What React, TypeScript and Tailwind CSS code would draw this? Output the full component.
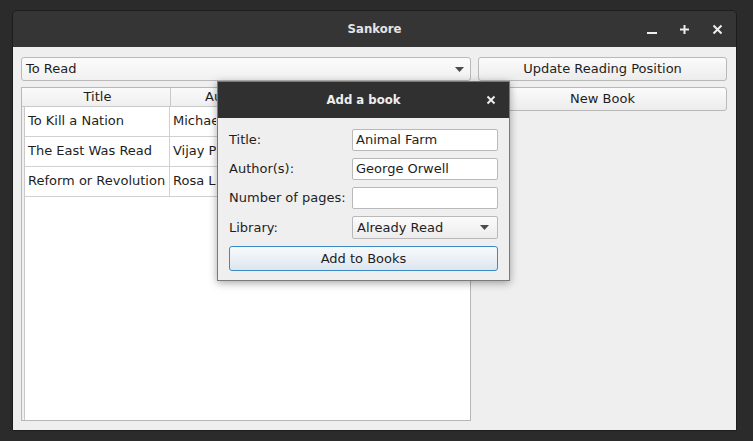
import React from "react";

const font = { fontFamily: '"DejaVu Sans", sans-serif' };
const cond = { fontFamily: '"DejaVu Sans Condensed", "DejaVu Sans", sans-serif' };

function Arrow() {
  return (
    <svg width="9" height="5" viewBox="0 0 9 5" className="shrink-0">
      <path d="M0 0h9L4.5 5z" fill="#4a4a4a" />
    </svg>
  );
}

export default function App() {
  const rows = [
    ["To Kill a Nation", "Michael Parenti"],
    ["The East Was Read", "Vijay Prashad"],
    ["Reform or Revolution", "Rosa Luxemburg"],
  ];
  return (
    <div className="w-[753px] h-[441px] bg-[#2b2b2b] pt-[10px] pl-[12px] text-[13px] text-[#1e1e1e]" style={font}>
      <div className="relative w-[725px] h-[421px] flex flex-col border border-[#1d1d1d] rounded-t-[5px] overflow-hidden">
        <div className="h-[36px] bg-[#353535] flex items-center justify-center relative shrink-0">
          <span className="text-[#e4e4e4] text-[13px] font-bold" style={cond}>Sankore</span>
          <div className="absolute right-[13px] top-0 h-full flex items-center gap-[22px] text-[#eeeeee]">
            <div className="w-[11px] h-[11px] flex items-end justify-center pb-[1px]"><div className="w-[10px] h-[2px] bg-[#eee]" /></div>
            <svg width="11" height="11" viewBox="0 0 11 11"><path d="M5.5 1v9M1 5.5h9" stroke="#eee" strokeWidth="2" /></svg>
            <svg width="11" height="11" viewBox="0 0 11 11"><path d="M1.5 1.5l8 8M9.5 1.5l-8 8" stroke="#eee" strokeWidth="2" /></svg>
          </div>
        </div>
        <div className="flex-1 bg-[#efefef] flex gap-[7px] pl-[8px] pr-[9px] pt-[10px] pb-[9px]">
          <div className="w-[450px] flex flex-col gap-[6px]">
            <div className="h-[24px] rounded-[3px] border border-[#b9b9b9] bg-gradient-to-b from-[#fbfbfb] to-[#f1f1f1] flex items-center justify-between pl-[4px] pr-[6px]">
              <span>To Read</span>
              <Arrow />
            </div>
            <div className="flex-1 border border-[#b7b7b7] bg-white flex flex-col">
              <div className="flex h-[19px] bg-gradient-to-b from-[#fafafa] to-[#efefef] border-b border-[#c9c9c9]">
                <div className="w-[149px] border-r border-[#c9c9c9] flex items-center justify-center pl-[3px]">Title</div>
                <div className="flex-1 flex items-center pl-[34px]">
                  <span className="w-[12px] overflow-hidden whitespace-nowrap">Author</span>
                </div>
              </div>
              <div className="flex flex-1">
                <div className="w-[3px] bg-[#efefef] border-r border-[#c9c9c9]" />
                <div className="flex-1 flex flex-col">
                  {rows.map((r) => (
                    <div key={r[0]} className="flex h-[30px] border-b border-[#d0d0d0]">
                      <div className="w-[145px] border-r border-[#d0d0d0] flex items-center pl-[3px] pb-[1px]">{r[0]}</div>
                      <div className="flex items-center pl-[3px] pb-[1px]">
                        <span className="w-[43px] overflow-hidden whitespace-nowrap">{r[1]}</span>
                      </div>
                    </div>
                  ))}
                </div>
              </div>
            </div>
          </div>
          <div className="flex-1 flex flex-col gap-[6px]">
            <div className="h-[24px] rounded-[3px] border border-[#b9b9b9] bg-gradient-to-b from-[#fbfbfb] to-[#ececec] flex items-center justify-center">Update Reading Position</div>
            <div className="h-[24px] rounded-[3px] border border-[#b9b9b9] bg-gradient-to-b from-[#fbfbfb] to-[#ececec] flex items-center justify-center">New Book</div>
          </div>
        </div>

        <div className="absolute left-[204px] top-[70px] w-[293px] h-[200px] border border-[#7a7a7a] bg-[#efefef] flex flex-col shadow-[0_2px_8px_rgba(0,0,0,0.35)]">
          <div className="h-[36px] bg-[#303030] flex items-center justify-center relative shrink-0">
            <span className="text-[#eeeeee] text-[13px] font-bold" style={cond}>Add a book</span>
            <svg className="absolute right-[13px] top-[13px]" width="10" height="10" viewBox="0 0 10 10"><path d="M1.5 1.5l7 7M8.5 1.5l-7 7" stroke="#eee" strokeWidth="2" /></svg>
          </div>
          <div className="flex flex-col pl-[11px] pr-[11px] pt-[11px] gap-[7px]">
            <div className="flex items-center h-[22px]">
              <span className="w-[123px]">Title:</span>
              <div className="flex-1 h-[22px] bg-white border border-[#b9b9b9] rounded-[2px] flex items-center pl-[3px]">Animal Farm</div>
            </div>
            <div className="flex items-center h-[22px]">
              <span className="w-[123px]">Author(s):</span>
              <div className="flex-1 h-[22px] bg-white border border-[#b9b9b9] rounded-[2px] flex items-center pl-[3px]">George Orwell</div>
            </div>
            <div className="flex items-center h-[22px]">
              <span className="w-[123px]">Number of pages:</span>
              <div className="flex-1 h-[22px] bg-white border border-[#b9b9b9] rounded-[2px]" />
            </div>
            <div className="flex items-center h-[23px]">
              <span className="w-[123px]">Library:</span>
              <div className="flex-1 h-[23px] rounded-[2px] border border-[#b9b9b9] bg-gradient-to-b from-[#fbfbfb] to-[#ececec] flex items-center justify-between pl-[4px] pr-[8px]">
                <span>Already Read</span>
                <Arrow />
              </div>
            </div>
            <div className="h-[25px] rounded-[3px] border border-[#3c8ac4] bg-gradient-to-b from-[#f8fafc] to-[#dde6ee] flex items-center justify-center">Add to Books</div>
          </div>
        </div>
      </div>
    </div>
  );
}
